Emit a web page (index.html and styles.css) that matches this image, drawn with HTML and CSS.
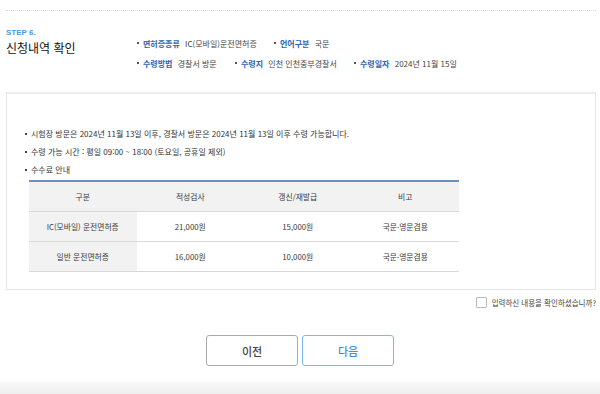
FILE: index.html
```html
<!DOCTYPE html>
<html lang="ko">
<head>
<meta charset="utf-8">
<link rel="stylesheet" href="styles.css">
</head>
<body>
<div class="page">
  <div class="dotline"></div>
  <div class="head">
    <div class="titles">
      <div class="step">STEP 6.</div>
      <h1 class="title">신청내역 확인</h1>
    </div>
    <div class="info">
      <div class="info-row">
        <span class="item item-a"><b>면허증종류</b> IC(모바일)운전면허증</span>
        <span class="item"><b>언어구분</b> 국문</span>
      </div>
      <div class="info-row">
        <span class="item item-b"><b>수령방법</b> 경찰서 방문</span>
        <span class="item item-c"><b>수령지</b> 인천 인천중부경찰서</span>
        <span class="item"><b>수령일자</b> 2024년 11월 15일</span>
      </div>
    </div>
  </div>

  <div class="box">
    <ul class="notes">
      <li>시험장 방문은 2024년 11월 13일 이후, 경찰서 방문은 2024년 11월 13일 이후 수령 가능합니다.</li>
      <li>수령 가능 시간 : 평일 09:00 ~ 18:00 (토요일, 공휴일 제외)</li>
      <li>수수료 안내</li>
    </ul>
    <table class="fee">
      <thead>
        <tr><th>구분</th><th>적성검사</th><th>갱신/재발급</th><th>비고</th></tr>
      </thead>
      <tbody>
        <tr><th>IC(모바일) 운전면허증</th><td>21,000원</td><td>15,000원</td><td>국문·영문겸용</td></tr>
        <tr><th>일반 운전면허증</th><td>16,000원</td><td>10,000원</td><td>국문·영문겸용</td></tr>
      </tbody>
    </table>
  </div>

  <div class="confirm">
    <label class="check"><span class="box-check"></span>입력하신 내용을 확인하셨습니까?</label>
  </div>

  <div class="buttons">
    <button class="btn btn-prev">이전</button>
    <button class="btn btn-next">다음</button>
  </div>
</div>
<div class="footer"></div>
</body>
</html>
```

FILE: styles.css
```css
* { box-sizing: border-box; }
html, body { margin: 0; padding: 0; background: #fff; }
body {
  font-family: "Noto Sans CJK KR", "Noto Sans", sans-serif;
  color: #333;
  font-size: 8px;
  width: 600px;
  height: 394px;
  overflow: hidden;
  display: flex;
  flex-direction: column;
}
.page { padding: 0 4px 0 6px; flex: 1; }
.dotline { margin-top: 10px; border-top: 1px dotted #d8d8d8; }
.head { display: flex; padding-top: 17px; height: 81px; }
.titles { width: 130px; }
.step { color: #4a98e0; font-weight: bold; font-size: 8px; line-height: 10px; font-family: "Liberation Sans", "Noto Sans CJK KR", sans-serif; }
.title { margin: 2px 0 0; font-size: 12px; font-weight: normal; color: #111; line-height: 16px; }
.info { padding-top: 5px; }
.info-row { display: flex; height: 20px; align-items: center; }
.item { position: relative; padding-left: 7px; color: #444; white-space: nowrap; }
.item::before { content: ""; position: absolute; left: 1px; top: 50%; width: 2px; height: 2px; background: #555; margin-top: -1px; }
.item b { color: #2a64b0; font-weight: bold; margin-right: 3px; }
.item-a { width: 137px; }
.item-b { width: 98px; }
.item-c { width: 119px; }

.box {
  border: 1px solid #e4e4e4;
  border-top: 2px solid #ececec;
  height: 198px;
  padding: 31px 0 0 17px;
}
.notes { list-style: none; margin: 0; padding: 0; }
.notes li { position: relative; padding-left: 7px; height: 18px; line-height: 18px; color: #333; }
.notes li::before { content: ""; position: absolute; left: 1px; top: 8px; width: 2px; height: 2px; background: #444; }
.fee { margin-top: 1px; margin-left: 5px; width: 430px; border-collapse: collapse; table-layout: fixed; border-top: 2px solid #6a8fc0; font-size: 7.8px; }
.fee th, .fee td { height: 30px; text-align: center; font-weight: normal; color: #3a3a3a; border-bottom: 1px solid #d9d9d9; padding: 0; }
.fee thead th { background: #f2f2f2; }
.fee tbody th { background: #f2f2f2; }

.confirm { display: flex; justify-content: flex-end; padding-top: 7px; }
.check { display: flex; align-items: center; gap: 5px; color: #444; font-size: 7.5px; }
.box-check { width: 11px; height: 11px; border: 1px solid #bbb; background: #fff; border-radius: 1px; }

.buttons { display: flex; justify-content: center; gap: 4px; margin-top: 27px; margin-left: -2px; }
.btn { width: 92px; height: 31px; background: #fff; border-radius: 3px; font-family: inherit; font-size: 11px; font-weight: 500; cursor: pointer; }
.btn-prev { border: 1px solid #aaa; color: #444; }
.btn-next { border: 1px solid #7bbaf0; color: #3d90e0; }

.footer { height: 12px; background: linear-gradient(#f8f8f8, #efefef); }
```
